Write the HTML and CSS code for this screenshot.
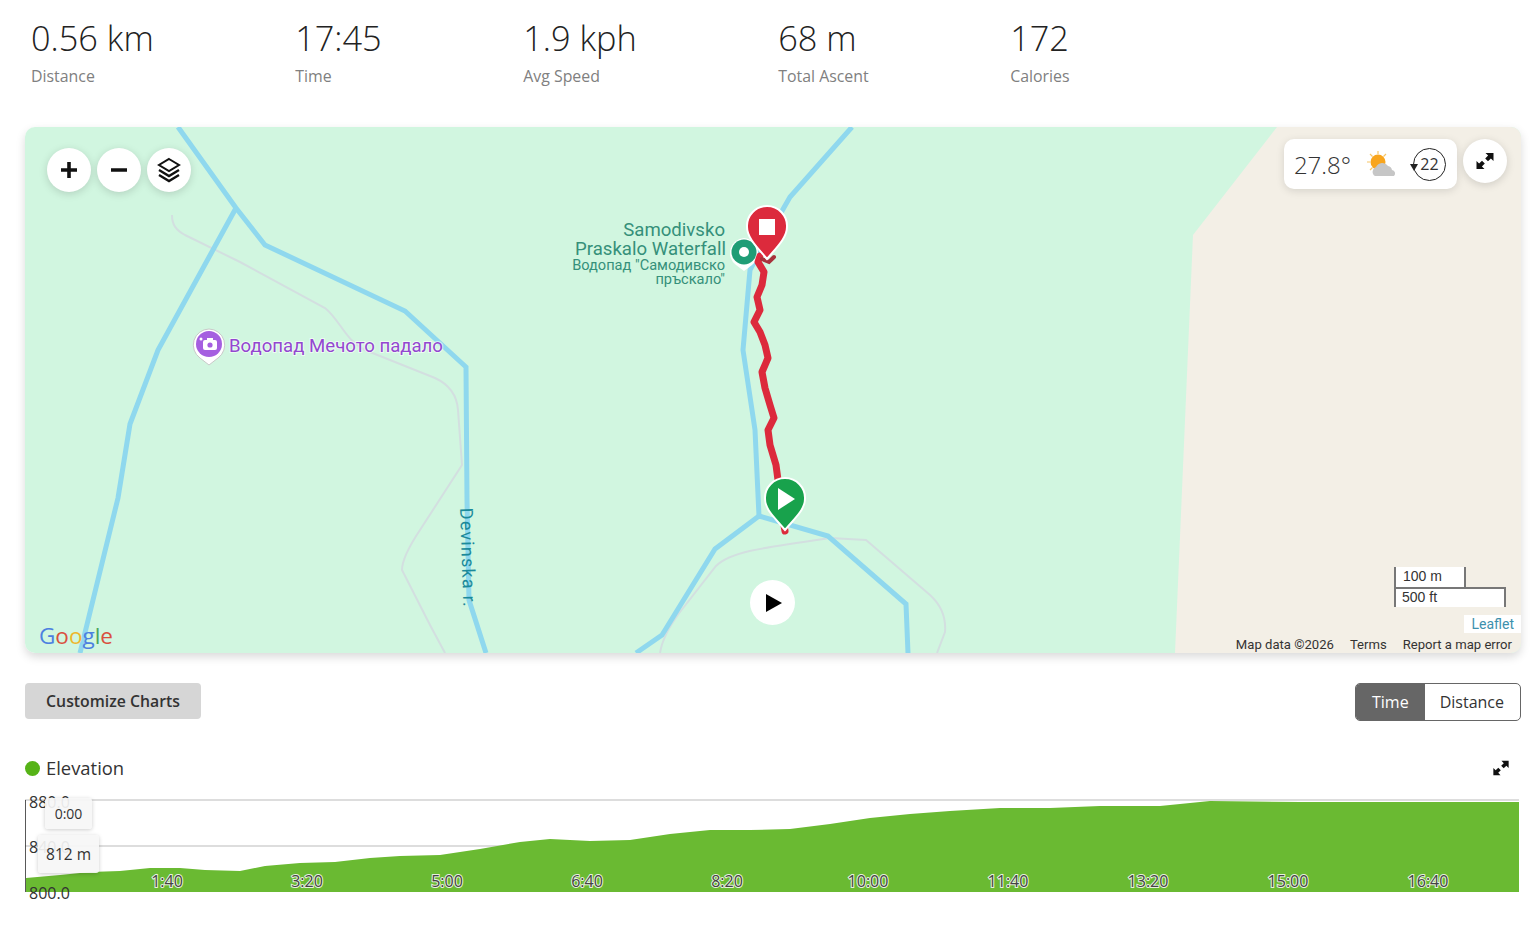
FILE: index.html
```html
<!DOCTYPE html>
<html lang="en">
<head>
    <meta charset="UTF-8">
    <title>Activity</title>
    <link rel="stylesheet" href="styles.css">
</head>
<body>
<div class="page">

    <!-- Stats -->
    <div class="stats">
        <div class="stat"><div class="stat-value">0.56 km</div><div class="stat-label">Distance</div></div>
        <div class="stat"><div class="stat-value">17:45</div><div class="stat-label">Time</div></div>
        <div class="stat"><div class="stat-value">1.9 kph</div><div class="stat-label">Avg Speed</div></div>
        <div class="stat"><div class="stat-value">68 m</div><div class="stat-label">Total Ascent</div></div>
        <div class="stat"><div class="stat-value">172</div><div class="stat-label">Calories</div></div>
    </div>

    <!-- Map -->
    <div class="map">
        <svg class="map-canvas" viewBox="25 127 1496 526" width="1496" height="526">
            <rect x="25" y="127" width="1496" height="526" fill="#d1f6e0"/>
            <polygon points="1277,127 1521,127 1521,653 1175,653 1193,235" fill="#f3efe6"/>

            <g class="trail">
                <path d="M172 215 C172 225 176 230 185 235 L240 262 L325 308 C340 320 345 340 365 350 L435 378 C450 385 457 395 458 410 L462 465 L420 530 C408 548 402 560 402 570 L430 625 L445 653"/>
                <path d="M660 653 C662 640 668 628 680 612 L716 566 C730 552 760 548 830 538 L866 540 L930 595 C942 606 946 620 945 632 L937 653"/>
            </g>
            <g class="river">
                <path d="M178 127 L236 208 L265 245 L405 311 L466 367 L467 500 L469 600 L486 653"/>
                <path d="M236 208 L158 350 L130 424 L118 498 L80 653"/>
                <path d="M852 127 L790 197 L770 232 L750 270 L743 350 L755 430 L759 516"/>
                <path d="M636 653 L662 635 L715 549 L759 516 L828 536 L906 604 L908 653"/>
            </g>

            <text class="label-river" transform="translate(460 508) rotate(88)">Devinska r.</text>

            <g class="label-green">
                <text class="label-big" x="725" y="236">Samodivsko</text>
                <text class="label-big" x="726" y="255">Praskalo Waterfall</text>
                <text class="label-small" x="725" y="270">Водопад "Самодивско</text>
                <text class="label-small" x="725" y="284">пръскало"</text>
            </g>

            <!-- waterfall pin -->
            <path d="M744 238 a15 15 0 0 1 8 27 l-8 6 l-8 -6 a15 15 0 0 1 8 -27z" fill="#fff"/>
            <circle cx="744" cy="252" r="12.5" fill="#1f9d76"/>
            <circle cx="744" cy="252" r="5" fill="#fff"/>

            <!-- photo pin -->
            <path d="M209 329 a16 16 0 0 1 9 29 l-9 7 l-9 -7 a16 16 0 0 1 9 -29z" fill="#fff" stroke="#c9c9c9" stroke-width="1"/>
            <circle cx="209" cy="344" r="13" fill="#a55fe0"/>
            <rect x="203" y="340" width="14" height="10" rx="2" fill="#fff"/>
            <rect x="207" y="338" width="6" height="3" fill="#fff"/>
            <circle cx="201" cy="339" r="1.5" fill="#fff"/>
            <circle cx="210" cy="345" r="2.6" fill="#a55fe0"/>
            <text class="label-purple" x="229" y="352">Водопад Мечото падало</text>

            <!-- track -->
            <path class="track" d="M785 531 L783 520 M778 480 L776 465 L770 445 L768 430 L774 418 L770 405 L765 388 L762 372 L768 358 L765 345 L760 332 L754 322 L760 310 L757 297 L762 285 L764 272 L758 262 L760 256"/>
            <path class="track-end" d="M762 259 L769 262 L774 257"/>

            <!-- finish pin -->
            <path d="M767 206 a20 20 0 0 1 20 21 c0 11 -11 21 -20 32 c-9 -11 -20 -21 -20 -32 a20 20 0 0 1 20 -21z" fill="#dc2a3c" stroke="#fff" stroke-width="2"/>
            <rect x="759" y="219" width="16" height="16" fill="#fff"/>

            <!-- start pin -->
            <path d="M785 478 a20 20 0 0 1 20 21 c0 11 -11 20 -20 31 c-9 -11 -20 -20 -20 -31 a20 20 0 0 1 20 -21z" fill="#18a24c" stroke="#fff" stroke-width="2"/>
            <polygon points="778,488 778,510 795,499" fill="#fff"/>
        </svg>

        <!-- Map controls -->
        <div class="map-tools">
            <button class="round-btn">
                <svg viewBox="0 0 20 20" width="20" height="20"><path d="M10 2 V18 M2 10 H18" stroke="#111" stroke-width="3.600" fill="none"/></svg>
            </button>
            <button class="round-btn">
                <svg viewBox="0 0 20 20" width="20" height="20"><path d="M2 10 H18" stroke="#111" stroke-width="3.600" fill="none"/></svg>
            </button>
            <button class="round-btn">
                <svg viewBox="0 0 24 26" width="24" height="26" fill="none" stroke="#111">
                    <path d="M12 2 L22 8 L12 14 L2 8 Z" stroke-width="2"/>
                    <path d="M2 13 L12 19 L22 13" stroke-width="2.400"/>
                    <path d="M2 18 L12 24 L22 18" stroke-width="2.400"/>
                </svg>
            </button>
        </div>

        <div class="map-top-right">
            <div class="weather">
                <span class="weather-temp">27.8°</span>
                <svg class="weather-icon" viewBox="0 0 32 28" width="32" height="28">
                    <g stroke="#f7c667" stroke-width="1.200">
                        <path d="M12 1 V4 M4 4 L6.500 6.500 M20 4 L17.500 6.500 M1 12 H4 M4 20 L6.500 17.500"/>
                    </g>
                    <circle cx="12" cy="12" r="7.500" fill="#f8a51d"/>
                    <path d="M9 26 a5 5 0 0 1 1 -9 a7 7 0 0 1 12 -1 a5 5 0 0 1 4 4 a3.500 3.500 0 0 1 2 6 z" fill="#c6c6c6"/>
                </svg>
                <div class="wind">
                    <span class="wind-value">22</span>
                    <svg class="wind-arrow" viewBox="0 0 8 8" width="8" height="8"><polygon points="0,1 8,1 4,8" fill="#222"/></svg>
                </div>
            </div>
            <button class="round-btn">
                <svg viewBox="0 0 20 20" width="20" height="20"><path class="expand-icon" d="M10.500 2 H18.500 V10 L15.900 7.400 L13 10.300 L10.200 7.500 L13.100 4.600 Z M9.500 18 H1.500 V10 L4.100 12.600 L7 9.700 L9.800 12.500 L6.900 15.400 Z"/></svg>
            </button>
        </div>

        <button class="round-btn play-btn">
            <svg viewBox="0 0 20 20" width="20" height="20"><polygon points="3,1 19,10 3,19" fill="#000"/></svg>
        </button>

        <div class="google-logo"><span class="g-blue">G</span><span class="g-red">o</span><span class="g-yellow">o</span><span class="g-blue">g</span><span class="g-green">l</span><span class="g-red">e</span></div>

        <div class="map-bottom-right">
            <div class="scale">
                <div class="scale-m">100 m</div>
                <div class="scale-ft">500 ft</div>
            </div>
            <div class="leaflet">Leaflet</div>
            <div class="attribution">
                <span>Map data ©2026</span>
                <span>Terms</span>
                <span>Report a map error</span>
            </div>
        </div>
    </div>

    <!-- Toolbar -->
    <div class="toolbar">
        <button class="customize-btn">Customize Charts</button>
        <div class="toggle">
            <div class="toggle-item active">Time</div>
            <div class="toggle-item">Distance</div>
        </div>
    </div>

    <!-- Chart -->
    <div class="chart-head">
        <div class="legend"><span class="legend-dot"></span>Elevation</div>
        <svg class="chart-expand" viewBox="0 0 20 20" width="18" height="18"><path class="expand-icon" d="M10.500 2 H18.500 V10 L15.900 7.400 L13 10.300 L10.200 7.500 L13.100 4.600 Z M9.500 18 H1.500 V10 L4.100 12.600 L7 9.700 L9.800 12.500 L6.900 15.400 Z"/></svg>
    </div>

    <div class="chart">
        <svg viewBox="25 795 1496 110" width="1496" height="110">
            <line class="grid" x1="25" y1="800" x2="1519" y2="800"/>
            <line class="grid" x1="25" y1="846" x2="1519" y2="846"/>
            <polygon fill="#6aba32" points="26,892 26,878 60,875 90,872 120,871 150,868 180,868 205,870 240,871 265,866 300,863 335,862 370,858 400,856 440,855 480,849 520,842 550,839 590,841 630,840 670,834 710,830 750,830 790,829 830,824 870,818 910,814 950,811 1000,808 1050,808 1100,806 1160,806 1210,801 1300,802 1400,802 1519,802 1519,892"/>
            <line class="axis" x1="25" y1="800" x2="25" y2="892"/>
            <g class="y-tick">
                <text x="29" y="808">880.0</text>
                <text x="29" y="853">840.0</text>
                <text x="29" y="899">800.0</text>
            </g>
            <g class="x-tick">
                <text x="167" y="887">1:40</text>
                <text x="307" y="887">3:20</text>
                <text x="447" y="887">5:00</text>
                <text x="587" y="887">6:40</text>
                <text x="727" y="887">8:20</text>
                <text x="868" y="887">10:00</text>
                <text x="1008" y="887">11:40</text>
                <text x="1148" y="887">13:20</text>
                <text x="1288" y="887">15:00</text>
                <text x="1428" y="887">16:40</text>
            </g>
        </svg>
        <div class="chart-tip tip-time">0:00</div>
        <div class="chart-tip tip-value">812 m</div>
    </div>
</div>
</body>
</html>
```

FILE: styles.css
```css
body {
    font-family: "Open Sans", sans-serif;
    margin: 0;
    padding: 0;
    background-color: #fff;
    color: #333;
}

button {
    font-family: inherit;
}

.page {
    padding: 14px 15px 0 25px;
}

/* Stats */
.stats {
    display: flex;
    gap: 141.500px;
    padding-left: 6px;
    margin-bottom: 39px;
}

.stat-value {
    font-size: 34.300px;
    font-weight: 300;
    line-height: 48px;
    color: #222;
}

.stat-label {
    font-size: 15.900px;
    line-height: 24px;
    margin-top: 2px;
    color: #808080;
}

/* Map */
.map {
    position: relative;
    height: 526px;
    border-radius: 10px;
    overflow: hidden;
    box-shadow: 0 4px 10px rgba(0, 0, 0, 0.15);
}

.map-canvas {
    display: block;
}

.river path {
    fill: none;
    stroke: #8fd8ee;
    stroke-width: 5;
    stroke-linejoin: miter;
}

.trail path {
    fill: none;
    stroke: #d3dfe0;
    stroke-width: 2;
}

.track {
    fill: none;
    stroke: #dc2a3c;
    stroke-width: 7;
    stroke-linejoin: round;
    stroke-linecap: round;
}

.track-end {
    fill: none;
    stroke: #a8323c;
    stroke-width: 4;
    stroke-linecap: round;
}

.label-river {
    font-family: Roboto, sans-serif;
    font-size: 18px;
    letter-spacing: 1.200px;
    fill: #1b8a9a;
}

.label-green {
    text-anchor: end;
    font-family: Roboto, sans-serif;
    fill: #35907a;
}

.label-big {
    font-size: 18.600px;
}

.label-small {
    font-size: 14.600px;
}

.label-purple {
    font-family: Roboto, sans-serif;
    font-size: 18.600px;
    fill: #9347d0;
    stroke: #fff;
    stroke-width: 2;
    stroke-opacity: 0.600;
    paint-order: stroke;
}

.round-btn {
    width: 44px;
    height: 44px;
    border: none;
    padding: 0;
    border-radius: 50%;
    background-color: #fff;
    display: flex;
    align-items: center;
    justify-content: center;
    box-shadow: 0 2px 8px rgba(0, 0, 0, 0.15);
}

.map-tools {
    position: absolute;
    top: 21px;
    left: 21.500px;
    display: flex;
    gap: 6px;
}

.map-top-right {
    position: absolute;
    top: 12px;
    right: 14px;
    display: flex;
    gap: 6px;
    align-items: flex-start;
}

.weather {
    display: flex;
    align-items: center;
    height: 50px;
    padding: 0 11px 0 10px;
    background-color: #fff;
    border-radius: 10px;
    box-shadow: 0 2px 8px rgba(0, 0, 0, 0.12);
}

.weather-temp {
    font-size: 24px;
    font-weight: 300;
    color: #333;
    margin-right: 15px;
}

.weather-icon {
    margin-right: 15px;
}

.wind {
    position: relative;
    width: 33px;
    height: 33px;
    border: 1px solid #222;
    border-radius: 50%;
    box-sizing: border-box;
    display: flex;
    align-items: center;
    justify-content: center;
}

.wind-value {
    font-size: 16px;
    color: #333;
}

.wind-arrow {
    position: absolute;
    left: -4px;
    top: 14px;
}

.expand-icon {
    fill: #111;
}

.play-btn {
    position: absolute;
    left: 725px;
    top: 453px;
    width: 45px;
    height: 45px;
    box-shadow: none;
}

.google-logo {
    position: absolute;
    left: 14px;
    bottom: 2px;
    font-family: "Open Sans", sans-serif;
    font-size: 22.500px;
    font-weight: 500;
}

.g-blue { color: #4c80e0; }
.g-red { color: #d9503f; }
.g-yellow { color: #eeb72c; }
.g-green { color: #4aa55c; }

.map-bottom-right {
    position: absolute;
    right: 0;
    bottom: 0;
    display: flex;
    flex-direction: column;
    align-items: flex-end;
    font-family: Roboto, sans-serif;
}

.scale {
    margin-right: 15px;
    width: 112px;
    font-family: "Liberation Sans", sans-serif;
    font-size: 14px;
    color: #333;
}

.scale-m {
    width: 72px;
    height: 20px;
    line-height: 19px;
    padding-left: 7px;
    box-sizing: border-box;
    background-color: #fff;
    border-left: 2px solid #777;
    border-right: 2px solid #777;
}

.scale-ft {
    height: 20px;
    line-height: 17px;
    padding-left: 6px;
    box-sizing: border-box;
    background-color: #fff;
    border: 2px solid #777;
    border-bottom: none;
}

.leaflet {
    margin-top: 8px;
    padding: 0 7px;
    height: 18px;
    line-height: 18px;
    font-size: 14px;
    color: #3d90ad;
    background-color: #fff;
}

.attribution {
    display: flex;
    gap: 16px;
    padding: 0 9px 0 0;
    height: 20px;
    line-height: 23px;
    font-size: 13.100px;
    color: #333;
}

/* Toolbar */
.toolbar {
    display: flex;
    justify-content: space-between;
    align-items: flex-start;
    margin-top: 30px;
}

.customize-btn {
    width: 176px;
    height: 36px;
    border: none;
    border-radius: 4px;
    background-color: #d6d6d6;
    color: #333;
    font-size: 15.800px;
    font-weight: 600;
}

.toggle {
    display: flex;
    height: 38px;
    border: 1px solid #666;
    border-radius: 5px;
    overflow: hidden;
    box-sizing: border-box;
}

.toggle-item {
    padding: 0 16px 0 15px;
    line-height: 36px;
    font-size: 16px;
    color: #333;
}

.toggle-item.active {
    padding: 0 16px;
    background-color: #666;
    color: #fff;
}

/* Chart */
.chart-head {
    display: flex;
    justify-content: space-between;
    align-items: center;
    height: 28px;
    margin-top: 33px;
    padding-right: 11px;
}

.legend {
    display: flex;
    align-items: center;
    gap: 6px;
    font-size: 18.400px;
    line-height: 26px;
    color: #333;
}

.legend-dot {
    width: 15px;
    height: 15px;
    border-radius: 50%;
    background-color: #56b317;
}

.chart {
    position: relative;
    margin-top: 13px;
    height: 110px;
}

.chart svg {
    display: block;
}

.grid {
    stroke: #ddd;
    stroke-width: 2;
}

.axis {
    stroke: #222;
    stroke-width: 1.500;
}

.y-tick text {
    font-size: 16px;
    fill: #333;
}

.x-tick text {
    font-size: 16px;
    fill: #444;
    text-anchor: middle;
    stroke: #e6f2dc;
    stroke-width: 2;
    paint-order: stroke;
}

.chart-tip {
    position: absolute;
    background-color: rgba(246, 246, 246, 0.92);
    border-radius: 3px;
    box-shadow: 0 1px 4px rgba(0, 0, 0, 0.2);
    text-align: center;
    color: #333;
}

.tip-time {
    left: 20px;
    top: 3px;
    width: 47px;
    height: 31px;
    line-height: 31px;
    font-size: 14px;
}

.tip-value {
    left: 13px;
    top: 40px;
    width: 61px;
    height: 38px;
    line-height: 38px;
    font-size: 15.500px;
}
```
